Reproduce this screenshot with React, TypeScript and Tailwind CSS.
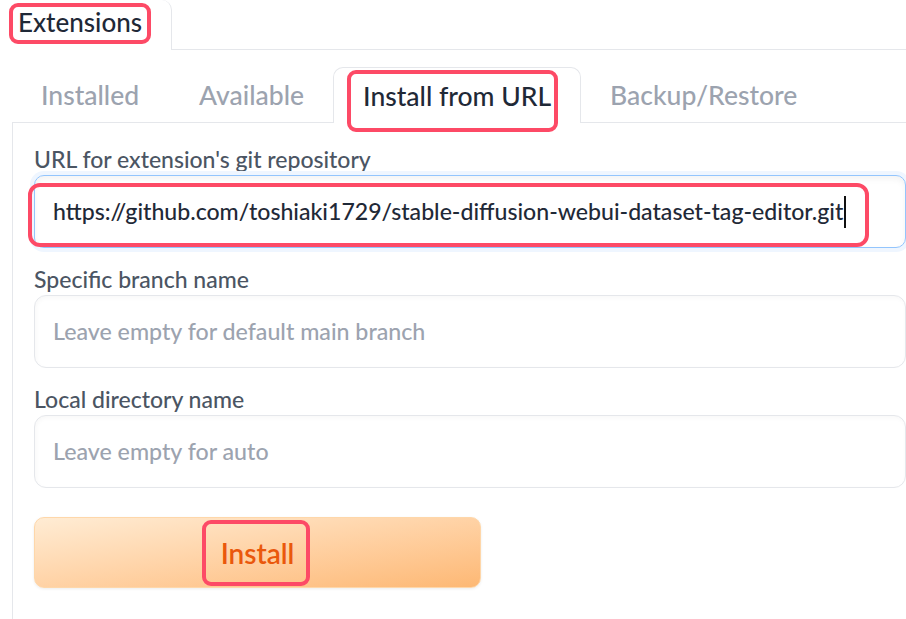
import React from 'react';

const Mark = ({ className }: { className: string }) => (
  <div className={`pointer-events-none absolute rounded-[9px] border-[4px] border-[#fd4a66] ${className}`} />
);

const tabs = ['Installed', 'Available', 'Install from URL', 'Backup/Restore'];

const App = () => {
  return (
    <div className="h-[619px] w-[906px] overflow-hidden bg-white font-['Lato',sans-serif] font-medium text-[#1f2937]">
      {/* top tab bar */}
      <div className="flex h-[50px]">
        <div className="relative w-[172px] rounded-tr-[10px] border-r border-[#e5e7eb] bg-white">
          <span className="absolute left-[18px] top-[5px] text-[26px] leading-[34px]">Extensions</span>
          <Mark className="left-[9px] top-[3px] h-[41px] w-[142px]" />
        </div>
        <div className="flex-1 border-b border-[#e5e7eb]" />
      </div>

      {/* inner tabs */}
      <div className="mt-[17px] flex h-[56px] pl-[12px]">
        {tabs.map((t, i) => {
          const active = t === 'Install from URL';
          return (
            <div
              key={t}
              className={`relative flex items-center pl-[29px] pt-[2px] text-[26.5px] ${i === 0 ? 'pr-[31px]' : 'pr-[29px]'} ${
                active
                  ? 'rounded-t-[10px] border border-b-0 border-[#e5e7eb] bg-white text-[#1f2937]'
                  : 'border-b border-[#e5e7eb] text-[#9ca3af]'
              }`}
            >
              {t}
              {active && <Mark className="left-[13px] top-[2px] h-[62px] w-[211px]" />}
            </div>
          );
        })}
        <div className="flex-1 border-b border-[#e5e7eb]" />
      </div>

      {/* panel */}
      <div className="ml-[12px] h-[500px] border-l border-[#e5e7eb] pl-[21px] pt-[22px]">
        <div className="text-[23px] leading-[28px] text-[#4b5563]">URL for extension's git repository</div>
        <div className="relative mt-[2px] flex h-[73px] items-center rounded-[10px] border border-[#93c5fd] bg-white pl-[18px] shadow-[0_0_0_4px_#eff6ff,inset_0_3px_6px_rgba(0,0,0,0.05)]">
          <span className="whitespace-nowrap text-[23.1px] text-[#1f2937]">
            https://github.com/toshiaki1729/stable-diffusion-webui-dataset-tag-editor.git
          </span>
          <span className="ml-px h-[32px] w-[1.5px] bg-[#111]" />
          <Mark className="-left-[7px] top-[7px] h-[64px] w-[841px] rounded-[12px]" />
        </div>

        <div className="mt-[17px] text-[23px] leading-[28px] text-[#4b5563]">Specific branch name</div>
        <div className="mt-[2px] flex h-[73px] items-center rounded-[12px] border border-[#e5e7eb] pl-[18px] shadow-[inset_1px_2px_4px_rgba(0,0,0,0.03)]">
          <span className="text-[23.2px] text-[#9ca3af]">Leave empty for default main branch</span>
        </div>

        <div className="mt-[17px] text-[23px] leading-[28px] text-[#4b5563]">Local directory name</div>
        <div className="mt-[2px] flex h-[73px] items-center rounded-[12px] border border-[#e5e7eb] pl-[18px] shadow-[inset_1px_2px_4px_rgba(0,0,0,0.03)]">
          <span className="text-[23.2px] text-[#9ca3af]">Leave empty for auto</span>
        </div>

        <button className="relative mt-[29px] flex h-[71px] w-[447px] items-center justify-center rounded-[10px] border border-[#fed7aa] bg-gradient-to-br from-[#ffecd4] to-[#fdb874] shadow-[0_1px_3px_rgba(0,0,0,0.08)]">
          <span className="text-[28px] font-semibold text-[#ea580c]">Install</span>
          <Mark className="left-[167px] top-[2px] h-[66px] w-[108px]" />
        </button>
      </div>
    </div>
  );
};

export default App;
